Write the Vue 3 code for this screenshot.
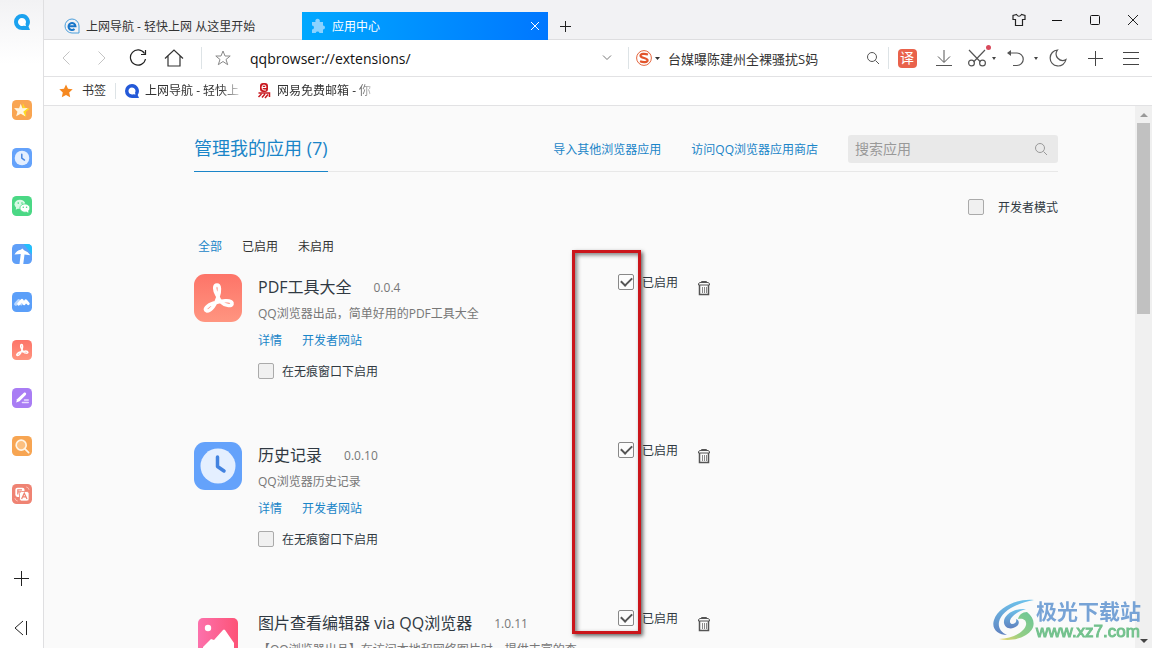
<script setup>
import { ref } from 'vue'

const sideApps = [
  { id: 'i-star', label: '收藏' },
  { id: 'i-clock', label: '历史' },
  { id: 'i-chat', label: '微信' },
  { id: 'i-travel', label: '导航' },
  { id: 'i-wave', label: '文档' },
  { id: 'i-pdf', label: 'PDF' },
  { id: 'i-pen', label: '笔记' },
  { id: 'i-find', label: '搜索' },
  { id: 'i-trans', label: '翻译' }
]

const filters = ['全部', '已启用', '未启用']
const activeFilter = ref('全部')
const devMode = ref(false)
const address = ref('qqbrowser://extensions/')
const keyword = ref('')

const apps = ref([
  { icon: 'i-pdf', name: 'PDF工具大全', version: '0.0.4', desc: 'QQ浏览器出品，简单好用的PDF工具大全', enabled: true, incognito: false },
  { icon: 'i-clock', name: '历史记录', version: '0.0.10', desc: 'QQ浏览器历史记录', enabled: true, incognito: false },
  { icon: 'i-image', name: '图片查看编辑器 via QQ浏览器', version: '1.0.11', desc: '【QQ浏览器出品】在访问本地和网络图片时，提供丰富的查', enabled: true, incognito: false }
])
</script>

<template>
  <div class="browser">
    <svg class="sprite" aria-hidden="true">
      <defs>
        <linearGradient id="g-pink" x1="0" y1="0" x2="1" y2="0"><stop offset="0" stop-color="#fc71ac" /><stop offset="1" stop-color="#fd5377" /></linearGradient>
        <linearGradient id="g-red" x1="0" y1="0" x2="0" y2="1"><stop offset="0" stop-color="#fd7468" /><stop offset="1" stop-color="#ff9580" /></linearGradient>
        <linearGradient id="g-swirl" x1="0" y1="0" x2="0" y2="1"><stop offset="0" stop-color="#62bdea" /><stop offset="1" stop-color="#5478bb" /></linearGradient>
        <linearGradient id="g-leaf" x1="1" y1="0" x2="0" y2="1"><stop offset="0" stop-color="#5fc191" /><stop offset=".6" stop-color="#8bcb7c" /><stop offset="1" stop-color="#f0d35c" /></linearGradient>
      </defs>
      <symbol id="i-star" viewBox="0 0 48 48">
        <rect width="48" height="48" rx="11" fill="#f9a552" />
        <path d="M26 7l5 11 11 3-9 8 1 11-10-5z" fill="#ffdc21" />
        <path d="M21 9l4 11 13-1-11 9 5 11-11-6-11 6 3-11-8-9 12 1z" fill="#fff6e2" />
      </symbol>
      <symbol id="i-clock" viewBox="0 0 48 48">
        <rect width="48" height="48" rx="11" fill="#64a2fb" />
        <circle cx="24" cy="24" r="17.5" fill="#e4efff" />
        <path d="M23.500 15v9.500l6.500 4.500" fill="none" stroke="#4383e0" stroke-width="3.500" stroke-linecap="round" stroke-linejoin="round" />
      </symbol>
      <symbol id="i-chat" viewBox="0 0 48 48">
        <rect width="48" height="48" rx="11" fill="#4bd885" />
        <ellipse cx="19" cy="20" rx="13" ry="11" fill="#d9f9e5" /><path d="M10 26l-1 7 8-4z" fill="#d9f9e5" />
        <ellipse cx="31" cy="29" rx="12" ry="10" fill="#fff" stroke="#4bd885" stroke-width="2" /><path d="M34 36l5 5v-7z" fill="#fff" />
        <g fill="#4bd885"><circle cx="15" cy="17" r="2" /><circle cx="24" cy="17" r="2" /><circle cx="27" cy="27" r="1.800" /><circle cx="35" cy="27" r="1.800" /></g>
      </symbol>
      <symbol id="i-travel" viewBox="0 0 48 48">
        <rect width="48" height="48" rx="11" fill="#5f9ff8" />
        <path d="M28 0h9q11 0 11 11v14z" fill="#22bffb" />
        <path d="M6 25q5-9 15-11l4-3 4 4q10 3 15 12l-14-2-3 23h-9l3-24z" fill="#fff" />
      </symbol>
      <symbol id="i-wave" viewBox="0 0 48 48">
        <rect width="48" height="48" rx="11" fill="#5b9ff9" />
        <path d="M9 29l7-8 6 7" fill="none" stroke="#b9d8ff" stroke-width="8" stroke-linecap="round" stroke-linejoin="round" />
        <path d="M16 29l8-9 5 8 4-7 6 7" fill="none" stroke="#fff" stroke-width="7" stroke-linecap="round" stroke-linejoin="round" />
      </symbol>
      <symbol id="i-pdf" viewBox="0 0 48 48">
        <rect width="48" height="48" rx="11" fill="url(#g-red)" />
        <path d="M23 21c-3-5-3-10 0-10s3 6 1 12c-2 7-7 14-11 14-4-1 0-6 7-8s17-4 18 0-7 3-11-1c-2-2-3-5-4-7z" fill="none" stroke="#fff" stroke-width="3.600" stroke-linejoin="round" />
      </symbol>
      <symbol id="i-pen" viewBox="0 0 48 48">
        <rect width="48" height="48" rx="11" fill="#a97df4" />
        <path d="M10 35l2-8 16-15c4-3 8 1 5 5L18 32z" fill="#fff" />
        <path d="M30 29h9M25 35h14" stroke="#e9dcff" stroke-width="3.500" stroke-linecap="round" />
      </symbol>
      <symbol id="i-find" viewBox="0 0 48 48">
        <rect width="48" height="48" rx="11" fill="#f7a552" />
        <circle cx="22" cy="22" r="12" fill="#fcc080" stroke="#fff5e6" stroke-width="4" /><path d="M31 31l9 9" stroke="#fff5e6" stroke-width="4" stroke-linecap="round" />
      </symbol>
      <symbol id="i-trans" viewBox="0 0 48 48">
        <rect width="48" height="48" rx="11" fill="#ef8373" />
        <rect x="8" y="9" width="22" height="22" rx="5" fill="#fff" /><path d="M24 14H14v11M14 19h8" fill="none" stroke="#ef8373" stroke-width="3" />
        <rect x="18" y="18" width="23" height="23" rx="5" fill="#fff" stroke="#ef8373" stroke-width="2" />
        <path d="M23 36l6.500-14L36 36M26 31h7" fill="none" stroke="#ef8373" stroke-width="3" />
        <path d="M34 7q6 1 7 7M7 34q1 6 7 7" fill="none" stroke="#ffc9bf" stroke-width="2" />
      </symbol>
      <symbol id="i-image" viewBox="0 0 48 48">
        <rect x="4" y="8" width="40" height="40" rx="5" fill="url(#g-pink)" />
        <circle cx="14" cy="18" r="3.200" fill="#fff" />
        <path d="M9 37l8-8 3 1 9-10q1-1 2 0l9 13v15H9z" fill="#fff" />
      </symbol>
      <symbol id="i-q" viewBox="0 0 16 16">
        <path d="M8 0a8 8 0 1 0 0 16h8l-1.500-3.500A8 8 0 0 0 8 0z" fill="currentColor" /><path d="M8 4a4 4 0 1 0 1.500 7.700l2.500.3-.5-2A4 4 0 0 0 8 4z" fill="#fff" />
      </symbol>
      <symbol id="i-search" viewBox="0 0 14 14">
        <circle cx="6" cy="6" r="4.500" fill="none" stroke="currentColor" /><path d="M9.500 9.500L13 13" stroke="currentColor" />
      </symbol>
    </svg>

    <aside class="side">
      <svg class="brand" width="16" height="16"><use href="#i-q" /></svg>
      <nav class="side-apps">
        <button v-for="s in sideApps" :key="s.id" class="icon-btn" :aria-label="s.label">
          <svg width="20" height="20"><use :href="'#' + s.id" /></svg>
        </button>
      </nav>
      <div class="side-end">
        <button class="icon-btn" aria-label="添加"><svg width="15" height="15"><path d="M7.500 0v15M0 7.500h15" stroke="#222" /></svg></button>
        <button class="icon-btn" aria-label="收起"><svg width="16" height="16" fill="none" stroke="#222"><path d="M9 1L1 8l8 7M12.500 1v14" /></svg></button>
      </div>
    </aside>

    <div class="window">
      <header class="tabs">
        <div class="tab">
          <svg width="16" height="16" fill="none"><path d="M8 1a7 7 0 1 0 0 14h7v-7A7 7 0 0 0 8 1z" stroke="#4b9fdc" /><path d="M4.500 8.300h7A3.500 3.500 0 1 0 10.500 11" stroke="#1976c9" stroke-width="2" /></svg>
          <span class="tab-title">上网导航 - 轻快上网 从这里开始</span>
        </div>
        <div class="tab active">
          <svg width="16" height="16"><path d="M2 4h3.500a2.300 2.300 0 1 1 4.200 0H13v3.500a2 2 0 1 1 0 4V15H9.500a2 2 0 0 0-3.800 0H2v-3.500a2 2 0 0 0 0-4z" fill="#8bd2ff" /></svg>
          <span class="tab-title">应用中心</span>
          <button class="icon-btn" aria-label="关闭标签页"><svg width="10" height="10"><path d="M1 1l8 8M9 1L1 9" stroke="#fff" /></svg></button>
        </div>
        <button class="icon-btn new-tab" aria-label="新建标签页"><svg width="11" height="11"><path d="M5.500 0v11M0 5.500h11" stroke="#222" /></svg></button>
        <div class="controls">
          <button class="icon-btn" aria-label="皮肤"><svg width="14" height="14" fill="none" stroke="#222" stroke-width="1.200"><path d="M4.500 1.500L1 2.500v4h2.500v6h7v-6H13v-4l-3.500-1Q7 5 4.500 1.500z" /></svg></button>
          <button class="icon-btn" aria-label="最小化"><svg width="12" height="12"><path d="M1 6.500h10" stroke="#111" /></svg></button>
          <button class="icon-btn" aria-label="最大化"><svg width="12" height="12"><rect x="1.500" y="1.500" width="9" height="9" rx="1" fill="none" stroke="#111" /></svg></button>
          <button class="icon-btn" aria-label="关闭"><svg width="12" height="12"><path d="M1 1l10 10M11 1L1 11" stroke="#222" /></svg></button>
        </div>
      </header>

      <div class="toolbar">
        <div class="nav">
          <button class="icon-btn" aria-label="后退"><svg width="16" height="16" fill="none" stroke="#c4c4c4"><path d="M11.500 1.500L5 8l6.500 6.500" /></svg></button>
          <button class="icon-btn" aria-label="前进"><svg width="16" height="16" fill="none" stroke="#c4c4c4"><path d="M4.500 1.500L11 8l-6.500 6.500" /></svg></button>
          <button class="icon-btn" aria-label="刷新"><svg width="18" height="18" fill="none" stroke="#222" stroke-width="1.200"><path d="M15.500 4.500A7.600 7.600 0 1 0 16.500 10M16.500 1v4.500h-4.500" /></svg></button>
          <button class="icon-btn" aria-label="主页"><svg width="20" height="18" fill="none" stroke="#333" stroke-width="1.200"><path d="M1 9.500L10 1l9 8.500M4 7v10h12V7" /></svg></button>
        </div>
        <span class="rule"></span>
        <button class="icon-btn fav" aria-label="收藏"><svg width="16" height="16" fill="none" stroke="#888"><path d="M8 1l2 5h5.200L11 9.500l1.700 5.200L8 11.500l-4.700 3.200L5 9.500.8 6H6z" /></svg></button>
        <input v-model="address" class="address" type="text" aria-label="地址栏" />
        <button class="icon-btn drop" aria-label="展开地址"><svg width="10" height="8" fill="none" stroke="#777"><path d="M1 1.500l4 4 4-4" /></svg></button>
        <span class="rule"></span>
        <div class="web-search">
          <button class="icon-btn engine" aria-label="搜索引擎">
            <svg width="16" height="16" fill="none"><circle cx="8" cy="8" r="7.400" stroke="#e4643c" /><path d="M12 4.500C9 3.500 4.500 3.300 4.500 5.800S11.600 7.800 11.600 10.200 7 12.500 4 11.200" stroke="#e2552c" stroke-width="2.200" /></svg>
            <svg width="5" height="3"><path d="M0 0h5L2.500 3z" fill="#333" /></svg>
          </button>
          <input class="query" type="text" value="台媒曝陈建州全裸骚扰S妈" aria-label="网页搜索" />
          <button class="icon-btn" aria-label="搜索"><svg width="14" height="14" color="#555"><use href="#i-search" /></svg></button>
        </div>
        <span class="rule"></span>
        <div class="tools">
          <button class="icon-btn t36" aria-label="翻译"><span class="translate">译</span></button>
          <button class="icon-btn t38" aria-label="下载"><svg width="18" height="18" fill="none" stroke="#555"><path d="M9 1v12M3 7.500L9 13.500l6-6M1 16.500h16" /></svg></button>
          <button class="icon-btn t28 cut" aria-label="截图"><svg width="20" height="18" fill="none" stroke="#555" stroke-width="1.200"><path d="M2 1l11.500 12M18 1L6.500 13" /><circle cx="4.500" cy="14" r="2.900" /><circle cx="15.500" cy="14" r="2.900" /></svg></button>
          <button class="icon-btn caret" aria-label="截图选项"><svg width="4" height="3"><path d="M0 0h4L2 3z" fill="#444" /></svg></button>
          <button class="icon-btn t36" aria-label="恢复"><svg width="18" height="18" fill="none" stroke="#555" stroke-width="1.200"><path d="M2 4h9a6 6 0 0 1 0 12.500H7" /><path d="M1 4l4-3v6z" fill="#555" stroke="none" /></svg></button>
          <button class="icon-btn caret" aria-label="恢复选项"><svg width="4" height="3"><path d="M0 0h4L2 3z" fill="#444" /></svg></button>
          <button class="icon-btn t38" aria-label="夜间模式"><svg width="18" height="18" fill="none" stroke="#555" stroke-width="1.200"><path d="M8.500 1a8 8 0 1 0 8.500 9.500A6.500 6.500 0 0 1 8.500 1z" /></svg></button>
          <button class="icon-btn t36" aria-label="添加"><svg width="15" height="15"><path d="M7.500 0v15M0 7.500h15" stroke="#444" /></svg></button>
          <button class="icon-btn t36" aria-label="菜单"><svg width="16" height="13"><path d="M0 .5h16M0 6.500h16M0 12.500h16" stroke="#444" /></svg></button>
        </div>
      </div>

      <nav class="bookmarks">
        <a href="#" class="mark"><svg width="14" height="14"><path d="M7 .5l2 4.300 4.700.5-3.500 3.200 1 4.700L7 11l-4.200 2.200 1-4.700L.3 5.300 5 4.800z" fill="#f6881f" /></svg>书签</a>
        <span class="rule small"></span>
        <a href="#" class="mark fade first"><svg width="14" height="14" color="#2459d8"><use href="#i-q" /></svg>上网导航 - 轻快上</a>
        <a href="#" class="mark fade second">
          <svg width="14" height="16" fill="none"><rect x="3" width="8" height="9" rx="3" fill="#c91920" /><path d="M5 4.500h4Q9 2 7 2T5 4.500 7 7h2" stroke="#fff" /><path d="M1.500 10h11v4M1.500 14l3-3M5 14.500l3-3.500M8 15l3-3.500" stroke="#c91920" stroke-width="1.500" /></svg>网易免费邮箱 - 你</a>
      </nav>

      <div class="viewport">
        <main class="page">
          <header class="head">
            <h1>管理我的应用 (7)</h1>
            <div class="head-links">
              <a href="#">导入其他浏览器应用</a>
              <a href="#">访问QQ浏览器应用商店</a>
            </div>
            <div class="app-search">
              <input v-model="keyword" type="text" placeholder="搜索应用" aria-label="搜索应用" />
              <svg width="14" height="14" color="#999"><use href="#i-search" /></svg>
            </div>
          </header>

          <label class="check dev"><input v-model="devMode" type="checkbox" /><span>开发者模式</span></label>

          <div class="filters">
            <button v-for="f in filters" :key="f" :class="{ on: f === activeFilter }" @click="activeFilter = f">{{ f }}</button>
          </div>

          <ul class="list">
            <li v-for="app in apps" :key="app.name" class="app">
              <svg width="48" height="48"><use :href="'#' + app.icon" /></svg>
              <div class="info">
                <h2>{{ app.name }}<small>{{ app.version }}</small></h2>
                <p>{{ app.desc }}</p>
                <div class="links"><a href="#">详情</a><a href="#">开发者网站</a></div>
                <label class="check"><input v-model="app.incognito" type="checkbox" /><span>在无痕窗口下启用</span></label>
              </div>
              <label class="check enable"><input v-model="app.enabled" type="checkbox" /><span>已启用</span></label>
              <button class="icon-btn trash" aria-label="删除">
                <svg width="14" height="16" fill="none" stroke="#555"><path d="M4.500 3V1.500h5V3M1.500 5V3.500L3 2.500h8l1.500 1V5z" /><path d="M2.500 5v9.500h9V5" stroke-width="1.500" /><path d="M5.500 7v6M7.500 7v6M9.500 7v6" stroke="#888" /></svg>
              </button>
            </li>
          </ul>
        </main>
        <div class="scrollbar">
          <svg width="8" height="4"><path d="M0 4l4-4 4 4z" fill="#999" /></svg>
          <span class="thumb"></span>
          <svg width="8" height="4"><path d="M0 0h8L4 4z" fill="#444" /></svg>
        </div>
      </div>
    </div>

    <div class="highlight"></div>
    <div class="watermark">
      <svg width="42" height="42" viewBox="0 0 42 42">
        <path d="M41 1C25-1 5 8 1 21c-3 9 4 15 13 15-6-3-9-7-8-13C8 13 23 4 41 1z" fill="url(#g-swirl)" />
        <path d="M33 10c-14-1-23 7-22 14 1 6 8 7 13 3 3-3 2-6-1-7 1 3-1 5-4 5-5-1-1-11 14-15z" fill="url(#g-swirl)" />
        <path d="M34 13c9 7 9 17-1 23-8 5-18 6-27 4 13-1 25-6 27-14 1-5-3-7-8-6 1-4 4-7 9-7z" fill="url(#g-leaf)" />
      </svg>
      <div class="wm-text"><strong>极光下载站</strong><span>www.xz7.com</span></div>
    </div>
  </div>
</template>

<style>
html, body { margin: 0; background: #fafafa; }
</style>

<style scoped>
* { box-sizing: border-box; }
.browser {
  position: relative;
  display: flex;
  height: 100vh;
  overflow: hidden;
  font: 12px/18px "Open Sans", "Noto Sans CJK SC", sans-serif;
  color: #333;
}
svg { display: block; flex: none; }
.sprite { position: absolute; width: 0; height: 0; }
button, input { font: inherit; color: inherit; }
a { color: #1a85c8; text-decoration: none; }
.icon-btn {
  display: flex;
  align-items: center;
  justify-content: center;
  flex: none;
  padding: 0;
  border: 0;
  background: none;
}
.side {
  flex: none;
  display: flex;
  flex-direction: column;
  align-items: center;
  width: 44px;
  padding: 14px 0 12px;
  border-right: 1px solid #dfdfe1;
  background: linear-gradient(#f2f2f4, #fff 64px);
}
.brand { color: #1ba2ef; }
.side-apps { display: flex; flex-direction: column; gap: 28px; margin-top: 70px; }
.side-end { display: flex; flex-direction: column; gap: 34px; margin-top: auto; }
.window { flex: 1; min-width: 0; display: flex; flex-direction: column; background: #fff; }
.tabs {
  display: flex;
  align-items: flex-end;
  flex: none;
  height: 40px;
  padding-left: 12px;
  background: linear-gradient(#f2f2f4 39px, #dedee0 39px);
}
.tab { display: flex; align-items: center; flex: 0 1 246px; gap: 6px; height: 28px; padding: 0 8px; }
.tab-title { flex: 1; padding-top: 2px; white-space: nowrap; overflow: hidden; }
.tab.active { color: #fff; background: linear-gradient(90deg, #00a8ff, #0077ff); }
.new-tab { width: 35px; height: 28px; }
.controls { display: flex; margin-left: auto; align-self: stretch; }
.controls .icon-btn { width: 38px; }
.toolbar {
  display: flex;
  align-items: center;
  flex: none;
  height: 37px;
  padding: 0 3px 0 4px;
  border-bottom: 1px solid #e2e2e4;
}
.nav { display: flex; margin-right: 9px; }
.nav .icon-btn { width: 36px; }
.rule { flex: none; width: 1px; height: 22px; background: #dde3e6; }
.fav { width: 42px; }
.address, .query { border: 0; padding: 0; background: none; outline: 0; min-width: 0; height: 28px; }
.address { flex: 1; margin-left: 6px; font-size: 14px; color: #111; }
.drop { width: 42px; }
.web-search { display: flex; align-items: center; flex: none; width: 259px; padding: 0 8px 0 7px; }
.engine { gap: 3px; }
.query { flex: 1; height: 26px; margin-left: 8px; font-size: 13px; }
.tools { display: flex; align-items: center; }
.translate { width: 19px; height: 19px; border-radius: 4px; background: #e9624b; color: #fff; font-size: 14px; line-height: 18px; text-align: center; }
.t36 { width: 36px; }
.t38 { width: 38px; }
.t28 { width: 28px; }
.caret { width: 6px; }
.cut { position: relative; }
.cut::after { content: ""; position: absolute; top: -4px; right: 0; width: 5px; height: 5px; border-radius: 50%; background: #d84a5c; }
.bookmarks {
  display: flex;
  align-items: center;
  flex: none;
  height: 29px;
  padding-left: 15px;
  border-bottom: 1px solid #e2e2e4;
}
.mark { display: flex; align-items: center; gap: 6px; line-height: 20px; color: #333; white-space: nowrap; }
.mark:first-child { gap: 9px; }
.rule.small { height: 16px; margin: 0 9px; }
.fade { -webkit-mask-image: linear-gradient(90deg, #000 80%, transparent); mask-image: linear-gradient(90deg, #000 80%, transparent); }
.first { width: 119px; }
.second { width: 122px; margin-left: 13px; }
.viewport { flex: 1; display: flex; min-height: 0; background: #fafafa; }
.page { flex: 1; min-width: 0; overflow: hidden; padding: 0 77px 0 150px; }
.head { display: flex; align-items: center; height: 66px; padding-top: 20px; border-bottom: 1px solid #e8e8e8; }
h1 { align-self: stretch; margin: 0 0 -1px; border-bottom: 1px solid #1a85c8; font-size: 18px; line-height: 44px; font-weight: 400; color: #1a85c8; }
.head-links { display: flex; gap: 30px; margin: 0 30px 0 auto; padding-top: 2px; }
.app-search { display: flex; align-items: center; width: 210px; height: 28px; padding: 0 10px 0 7px; border-radius: 3px; background: #e9e9e9; }
.app-search input { flex: 1; min-width: 0; padding: 0; border: 0; outline: 0; background: none; font-size: 14px; }
.app-search input::placeholder { color: #999; opacity: 1; }
.check { display: flex; align-items: center; gap: 8px; width: max-content; height: 18px; color: #303942; }
.check span { padding-top: 2px; }
.check input {
  appearance: none;
  display: grid;
  place-items: center;
  width: 16px;
  height: 16px;
  margin: 0;
  border: 1px solid #aaa;
  border-radius: 2px;
  background: #f0f0f0;
}
.check input:checked { background: #fcfcfc; border-color: #888; }
.check input:checked::after { content: ""; width: 5px; height: 9px; margin-top: -3px; border: solid #555; border-width: 0 2px 2px 0; transform: rotate(45deg); }
.check.dev { height: 16px; margin: 27px 0 0 auto; gap: 14px; }
.filters { display: flex; gap: 20px; margin-top: 22px; padding-left: 4px; }
.filters button { padding: 0; border: 0; background: none; line-height: 20px; }
.filters .on { color: #1a85c8; }
.list { list-style: none; margin: 17px 0 0; padding: 0; }
.app { display: flex; align-items: flex-start; height: 168px; }
.info { flex: 0 1 360px; padding-left: 16px; box-sizing: content-box; }
h2 { display: flex; align-items: center; gap: 22px; margin: 0; font-size: 16px; line-height: 26px; font-weight: 400; color: #303942; white-space: nowrap; }
small { padding-top: 2px; font-size: 12px; line-height: 24px; color: #777; }
p { margin: 5px 0 0; color: #777; white-space: nowrap; }
.links { display: flex; gap: 20px; margin: 9px 0 12px; }
.check.enable { height: 16px; }
.trash { margin: 6px 0 0 19px; }
.scrollbar { display: flex; flex-direction: column; align-items: center; flex: none; width: 17px; padding: 7px 0 5px; background: #f0f0f0; }
.thumb { width: 13px; height: 36%; margin: 6px 0 auto; background: #c1c1c1; }
.highlight {
  position: absolute;
  left: 572px;
  top: 250px;
  width: 69px;
  height: 384px;
  border: 3px solid #cb151b;
  box-shadow: 2px 2px 4px rgba(0, 0, 0, .6), inset 2px 2px 4px rgba(0, 0, 0, .5);
}
.watermark { position: absolute; right: 11px; bottom: 7px; display: flex; align-items: center; opacity: .92; }
.wm-text { display: flex; flex-direction: column; padding-left: 1px; }
.wm-text strong { font-size: 21px; line-height: 24px; color: #6c9cd3; }
.wm-text span { font: 17px/18px "Liberation Sans", sans-serif; color: #68bd84; -webkit-text-stroke: 1px #68bd84; }
</style>
